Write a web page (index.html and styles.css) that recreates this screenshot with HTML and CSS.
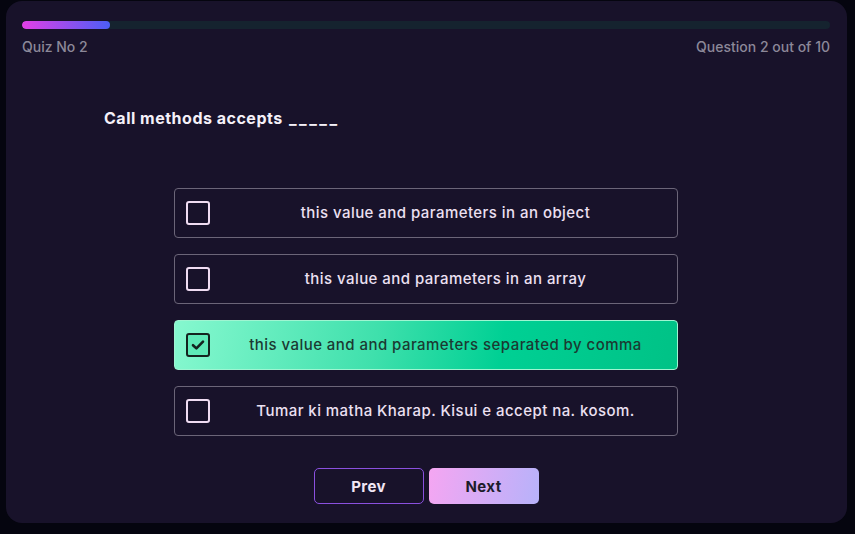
FILE: index.html
```html
<!DOCTYPE html>
<html>
<head>
<meta charset="utf-8">
<link rel="stylesheet" href="styles.css">
</head>
<body>
<div class="card">
  <div class="progress"><div class="progress-fill"></div></div>
  <div class="meta">
    <span>Quiz No 2</span>
    <span class="count">Question 2 out of 10</span>
  </div>
  <h2 class="question">Call methods accepts <span class="blank">_____</span></h2>
  <div class="options">
    <div class="option">
      <span class="box"></span>
      <span class="label">this value and parameters in an object</span>
    </div>
    <div class="option">
      <span class="box"></span>
      <span class="label">this value and parameters in an array</span>
    </div>
    <div class="option selected">
      <span class="box">
        <svg width="14" height="12" viewBox="0 0 14 12"><path d="M2 6.2 L5.4 9.4 L12 2.6" fill="none" stroke="#14231f" stroke-width="2.6" stroke-linecap="round" stroke-linejoin="round"/></svg>
      </span>
      <span class="label">this value and and parameters separated by comma</span>
    </div>
    <div class="option">
      <span class="box"></span>
      <span class="label">Tumar ki matha Kharap. Kisui e accept na. kosom.</span>
    </div>
  </div>
  <div class="actions">
    <button class="btn prev">Prev</button>
    <button class="btn next">Next</button>
  </div>
</div>
</body>
</html>
```
FILE: styles.css
```css
* { box-sizing: border-box; }
html, body { margin: 0; padding: 0; }
body {
  width: 855px;
  height: 534px;
  background: #05050f;
  font-family: Inter, "Liberation Sans", sans-serif;
  padding: 1px 8px 0 6px;
  overflow: hidden;
}
.card {
  width: 841px;
  height: 522px;
  background: #18122a;
  border-radius: 16px;
  padding: 20px 17px 0 16px;
  display: flex;
  flex-direction: column;
}
.progress {
  height: 8px;
  border-radius: 4px;
  background: #15232f;
  overflow: hidden;
}
.progress-fill {
  width: 88px;
  height: 100%;
  border-radius: 4px;
  background: linear-gradient(90deg, #e23fe6, #4b5ef6);
}
.meta {
  display: flex;
  justify-content: space-between;
  margin-top: 8px;
  font-size: 14px;
  line-height: 20px;
  font-weight: 500;
  color: #8c8899;
}
.meta .count { letter-spacing: 0; }
.question {
  margin: 50px 0 0 82px;
  font-size: 16px;
  line-height: 22px;
  font-weight: 700;
  color: #f4f0f8;
  letter-spacing: 0.5px;
}
.blank {
  letter-spacing: 2.5px;
  margin-left: 2px;
}
.options {
  width: 504px;
  margin: 59px auto 0;
  display: flex;
  flex-direction: column;
  gap: 16px;
}
.option {
  height: 50px;
  border: 1px solid #6b6578;
  border-radius: 4px;
  display: flex;
  align-items: center;
  padding: 0 12px 0 11px;
  color: #ece0f2;
  font-size: 15px;
  font-weight: 500;
  letter-spacing: 0.45px;
}
.box {
  width: 24px;
  height: 24px;
  border: 2px solid #f0dcf2;
  border-radius: 3px;
  flex: none;
  display: flex;
  align-items: center;
  justify-content: center;
}
.label {
  flex: 1;
  text-align: center;
  padding-left: 16px;
  padding-bottom: 2px;
}
.option.selected {
  border-color: #9ff5d2;
  background: linear-gradient(100deg, #86f8cf 0%, #3fe0ac 40%, #00d094 65%, #00c286 100%);
  color: #1b3a32;
}
.option.selected .box {
  border-color: #14231f;
  background: #5eeab8;
}
.actions {
  display: flex;
  justify-content: center;
  gap: 5px;
  margin-top: 32px;
}
.btn {
  width: 110px;
  height: 36px;
  border-radius: 5px;
  font-family: Inter, "Liberation Sans", sans-serif;
  font-size: 15px;
  font-weight: 700;
  letter-spacing: 0.4px;
  cursor: pointer;
}
.prev {
  background: transparent;
  border: 1px solid #8a50de;
  color: #f0e6f4;
}
.next {
  border: none;
  background: linear-gradient(100deg, #f5a6f2, #b7b2fa);
  color: #1c1c2a;
}
```
